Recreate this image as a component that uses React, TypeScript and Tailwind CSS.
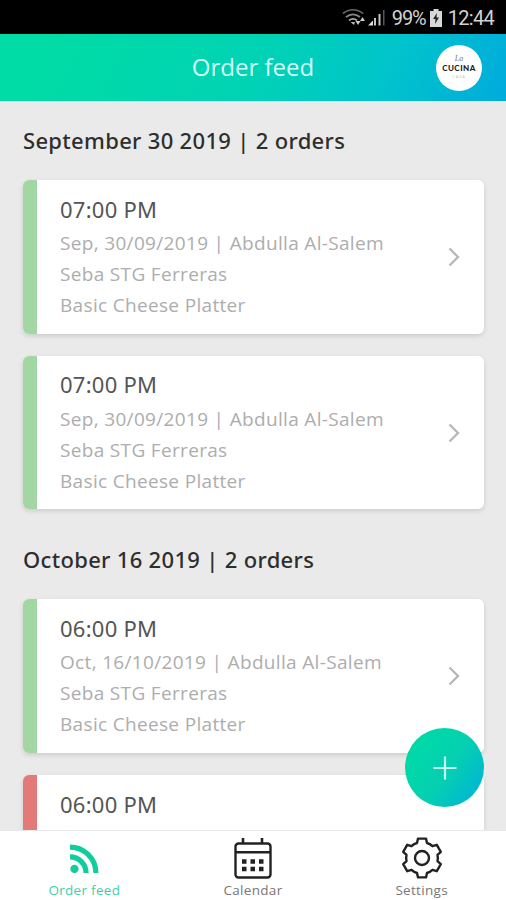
import React from 'react'

type Order = {
  time: string
  details: string[]
  confirmed: boolean
}

type Section = {
  title: string
  orders: Order[]
}

const sections: Section[] = [
  {
    title: 'September 30 2019 | 2 orders',
    orders: [
      {
        time: '07:00 PM',
        details: ['Sep, 30/09/2019 | Abdulla Al-Salem', 'Seba STG Ferreras', 'Basic Cheese Platter'],
        confirmed: true,
      },
      {
        time: '07:00 PM',
        details: ['Sep, 30/09/2019 | Abdulla Al-Salem', 'Seba STG Ferreras', 'Basic Cheese Platter'],
        confirmed: true,
      },
    ],
  },
  {
    title: 'October 16 2019 | 2 orders',
    orders: [
      {
        time: '06:00 PM',
        details: ['Oct, 16/10/2019 | Abdulla Al-Salem', 'Seba STG Ferreras', 'Basic Cheese Platter'],
        confirmed: true,
      },
      { time: '06:00 PM', details: [], confirmed: false },
    ],
  },
]

function StatusBar() {
  return (
    <div className="flex h-[34px] shrink-0 items-center justify-end bg-black pt-[2px] pr-3 font-[Roboto,sans-serif] text-[20px] text-[#d2d2d2]">
      <svg width="44" height="20" viewBox="0 0 44 20" fill="none" className="mr-1.5">
        <g stroke="#666" strokeWidth="1.700">
          <path d="M1 5.500C7 .5 15 .5 21 5.500" />
          <path d="M4 9C8.500 5.500 13.500 5.500 18 9" stroke="#888" />
          <path d="M7 12.500C9.500 10.500 12.500 10.500 15 12.500" stroke="#aaa" />
        </g>
        <path d="M8.500 14h4.500l-1 3z" fill="#bbb" />
        <path d="M13.500 13h5L16 17zM18 13l2.500-4 2.500 4z" fill="#ccc" />
        <path d="M26 17.500l5-5v5z" fill="#ddd" />
        <path d="M32 10h2v7.500h-2zM36.500 6h2v11.500h-2z" fill="#c4c4c4" />
        <path d="M41 2h1.500v15.500H41z" fill="#555" />
      </svg>
      <span className="mr-1 tracking-[-1.1px]">99%</span>
      <svg width="12" height="18" viewBox="0 0 12 18" className="mr-1.5">
        <path d="M3.500 0h5v2H12v16H0V2h3.500z" fill="#d8d8d8" />
        <path d="M7 4L3 10h2.500L5 15l4-6.500H6.500z" fill="#222" />
      </svg>
      <span className="tracking-[-0.7px]">12:44</span>
    </div>
  )
}

function Header() {
  return (
    <header className="grid h-[67px] shrink-0 grid-cols-[1fr_auto_1fr] items-center bg-[linear-gradient(115deg,#00dca6_10%,#00d3b4_50%,#00c4cb_75%,#00abdc_100%)] pr-6">
      <span />
      <h1 className="pb-px pl-6 text-[24px] leading-none text-[#d5fff5]">Order feed</h1>
      <div className="flex size-[46px] flex-col items-center justify-center justify-self-end rounded-full bg-white">
        <span className="h-[9px] font-['Liberation_Serif',serif] text-[8px] leading-[9px] text-[#777] italic">La</span>
        <span className="font-[Lato,sans-serif] text-[8px] leading-[11px] font-black tracking-[0.5px] text-[#222]">CUCINA</span>
        <span className="h-[7px] text-[4px] leading-[5px] tracking-[1px] text-[#bbb]">CASA</span>
      </div>
    </header>
  )
}

function OrderCard({ order }: { order: Order }) {
  return (
    <li className="flex h-[153.500px] shrink-0 items-center overflow-hidden rounded-[6px] bg-white shadow-[0_2px_5px_rgba(0,0,0,0.13)]">
      <div className={order.confirmed ? 'h-full w-[14px] bg-[#a2d6a2]' : 'h-full w-[14px] bg-[#e27a78]'} />
      <div className="h-full flex-1 pt-[10.500px] pl-[23px] text-[19px] leading-[31px] tracking-[0.33px] text-[#adadad]">
        <p className="font-['Noto_Sans',sans-serif] text-[22px] leading-[37.500px] tracking-[0.25px] text-[#555]">{order.time}</p>
        {order.details.map((line) => (
          <p key={line}>{line}</p>
        ))}
      </div>
      <svg width="12" height="20" viewBox="0 0 12 20" fill="none" stroke="#b8b8b8" strokeWidth="2.400" className="mr-6">
        <path d="M1.500 1.500L10 10L1.500 18.500" />
      </svg>
    </li>
  )
}

function FeedIcon() {
  return (
    <svg width="29" height="29" viewBox="0 0 28 28" fill="none" stroke="#10ce9b" strokeWidth="5">
      <circle cx="4.300" cy="24" r="4" fill="#10ce9b" stroke="none" />
      <path d="M0 12.500A15.500 15.500 0 0 1 15.500 28" />
      <path d="M0 3A25 25 0 0 1 25 28" />
    </svg>
  )
}

function CalendarIcon() {
  return (
    <svg width="38" height="42" viewBox="0 0 38 42" fill="none" stroke="#222" strokeWidth="2.400">
      <rect x="1.500" y="6.500" width="35" height="34" rx="3" />
      <path d="M1.500 15.200h35" />
      <path d="M9 1v6M28 1v6" strokeWidth="2.600" />
      <path d="M8 24.500h4.500M16.500 24.500h4.500M25 24.500h4.500M8 32h4.500M16.500 32h4.500M25 32h4.500" strokeWidth="4.500" />
    </svg>
  )
}

function GearIcon() {
  return (
    <svg width="42" height="42" viewBox="-21 -21 42 42" fill="none" stroke="#222" strokeWidth="2.400" strokeLinejoin="round">
      <path d="M-5 -15L-4 -19.400H4L5 -15Q8 -14.200 10.500 -11.800L14.800 -13.200L18.800 -6.200L15.500 -3.200Q16.200 0 15.500 3.200L18.800 6.200L14.800 13.200L10.500 11.800Q8 14.200 5 15L4 19.400H-4L-5 15Q-8 14.200 -10.500 11.800L-14.800 13.200L-18.800 6.200L-15.500 3.200Q-16.200 0 -15.500 -3.200L-18.800 -6.200L-14.800 -13.200L-10.500 -11.800Q-8 -14.200 -5 -15Z" />
      <circle r="7" />
    </svg>
  )
}

function BottomNav() {
  return (
    <nav className="grid h-[70px] shrink-0 grid-cols-3 border-t border-[#e9e9e9] bg-white text-center text-[13.500px] leading-[18px] tracking-[0.3px] text-[#777]">
      <a href="#" className="flex flex-col items-center text-[#3fd0a9]">
        <span className="flex h-[50px] items-center pt-[4px]"><FeedIcon /></span>
        Order feed
      </a>
      <a href="#" className="flex flex-col items-center">
        <span className="flex h-[50px] items-center pt-[3px]"><CalendarIcon /></span>
        Calendar
      </a>
      <a href="#" className="flex flex-col items-center">
        <span className="flex h-[50px] items-center pt-[3px]"><GearIcon /></span>
        Settings
      </a>
    </nav>
  )
}

export default function App() {
  return (
    <div className="relative flex h-[900px] w-[506px] flex-col overflow-hidden bg-[#eaeaea] font-['Open_Sans',sans-serif]">
      <StatusBar />
      <Header />
      <main className="min-h-0 flex-1 overflow-hidden pr-[22px] pl-[23px]">
        {sections.map((section) => (
          <section key={section.title} className="mb-[11px]">
            <h2 className="flex h-[79px] items-center pb-px font-['Noto_Sans',sans-serif] text-[22px] font-medium tracking-[0.32px] text-[#2e2e2e]">
              {section.title}
            </h2>
            <ul className="flex flex-col gap-[22.300px]">
              {section.orders.map((order, i) => (
                <OrderCard key={i} order={order} />
              ))}
            </ul>
          </section>
        ))}
      </main>
      <BottomNav />
      <button
        aria-label="Add order"
        className="absolute right-[22px] bottom-[93px] flex size-[79px] items-center justify-center rounded-full bg-[linear-gradient(125deg,#00d8a8_20%,#05cfb2_55%,#00b2d8_95%)]"
      >
        <svg width="24" height="24" viewBox="0 0 24 24" stroke="#c5fff5" strokeWidth="2.200">
          <path d="M12 .5v23M.5 12h23" />
        </svg>
      </button>
    </div>
  )
}
